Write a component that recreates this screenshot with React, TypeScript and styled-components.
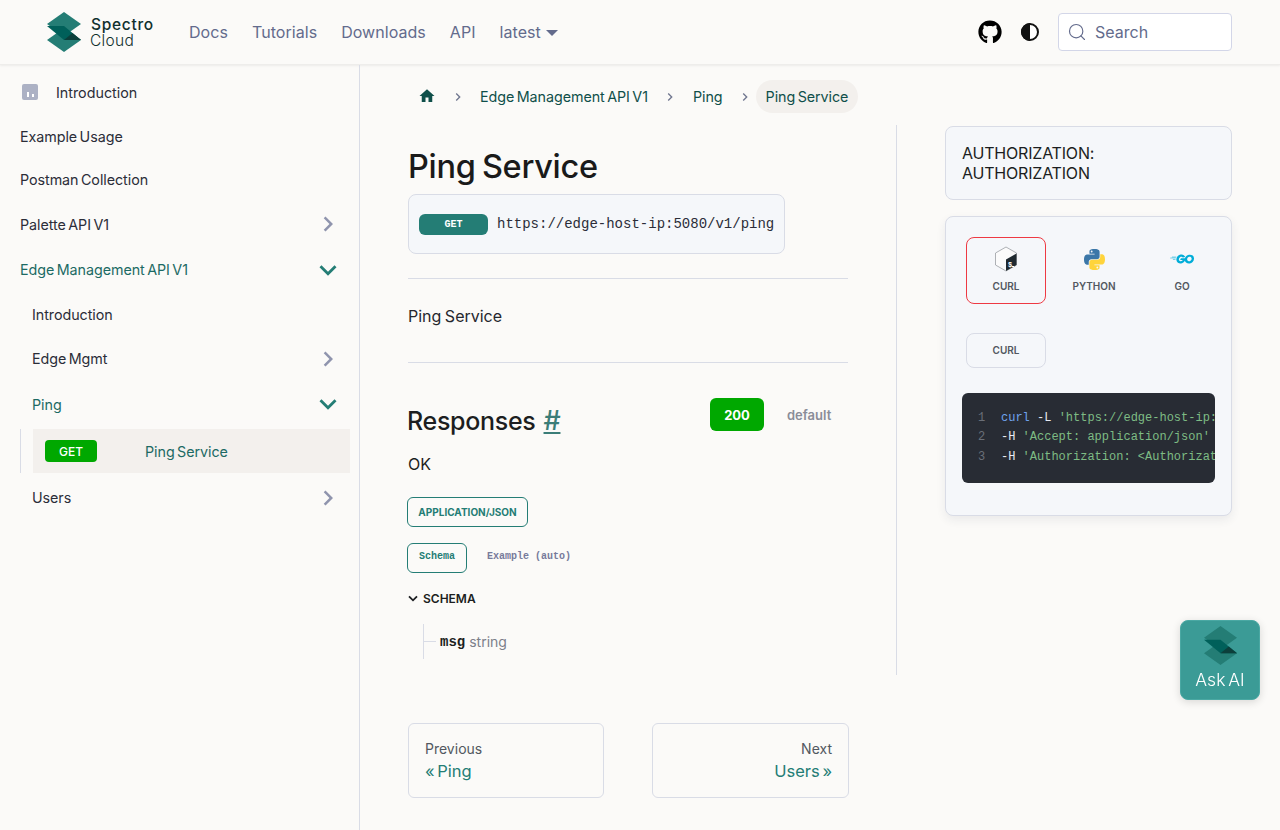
import React from 'react';
import styled, { createGlobalStyle } from 'styled-components';
import { Search as SearchIcon } from 'lucide-react';
import { FaGithub } from 'react-icons/fa';
import { MdChevronRight, MdExpandMore, MdHome, MdKeyboardArrowRight } from 'react-icons/md';
import { SiGo } from 'react-icons/si';

const teal = '#247d75';
const deepTeal = '#0f4f4a';
const line = '#d9dce6';
const panel = '#f5f7fa';
const mono = `'Liberation Mono', monospace`;

const GlobalStyle = createGlobalStyle`
    html, body {
        margin: 0;
        padding: 0;
        background: #fbfaf8;
        color: #1c1e21;
        font-family: Inter, 'Noto Sans', sans-serif;
    }
    * {
        box-sizing: border-box;
    }
`;

const Header = styled.header`
    display: flex;
    align-items: center;
    height: 65px;
    padding: 0 48px 1px 47px;
    background: #fbfaf8;
    border-bottom: 1px solid #eeedeb;
    box-shadow: 0 1px 2px rgba(0, 0, 0, 0.06);
`;

const Brand = styled.div`
    display: flex;
    align-items: center;
    gap: 10px;
    width: 142px;
`;

const BrandText = styled.div`
    display: flex;
    flex-direction: column;
    margin-top: 2px;
    font-size: 15.5px;
    line-height: 16px;
    color: #10302e;
`;

const BrandTop = styled.span`
    font-weight: 500;
    letter-spacing: 0.7px;
`;

const BrandBottom = styled.span`
    margin-left: -1px;
    font-weight: 300;
    letter-spacing: 0.3px;
`;

const NavLinks = styled.nav`
    display: flex;
    align-items: center;
    gap: 24px;
    flex: 1;
`;

const NavLink = styled.a`
    display: flex;
    align-items: center;
    gap: 5px;
    font-size: 16px;
    letter-spacing: 0.05px;
    color: #636b8c;
`;

const Caret = styled.span`
    width: 0;
    height: 0;
    margin-top: 2px;
    border-left: 6px solid transparent;
    border-right: 6px solid transparent;
    border-top: 6px solid #636b8c;
`;

const HeaderTools = styled.div`
    display: flex;
    align-items: center;
`;

const GithubLink = styled.a`
    display: flex;
    color: #000;
    margin-right: 18px;
`;

const ThemeToggle = styled.span`
    display: flex;
    margin-right: 18px;
`;

const SearchBox = styled.div`
    display: flex;
    align-items: center;
    gap: 8px;
    width: 174px;
    height: 38px;
    padding-left: 8px;
    background: #fff;
    border: 1px solid #d3d6e8;
    border-radius: 4px;
    font-size: 16px;
    color: #636b8c;
`;

const Body = styled.div`
    display: flex;
    align-items: stretch;
    min-height: 765px;
`;

const Sidebar = styled.aside`
    width: 360px;
    flex: none;
    padding-top: 5px;
    border-right: 1px solid ${line};
`;

const SideRow = styled.div<{ $h: number; $nested?: boolean; $active?: boolean }>`
    display: flex;
    align-items: center;
    justify-content: space-between;
    height: ${(p) => p.$h}px;
    padding: 0 16px 0 ${(p) => (p.$nested ? 32 : 20)}px;
    font-size: 14.3px;
    letter-spacing: -0.05px;
    word-spacing: -1.5px;
    color: ${(p) => (p.$active ? '#1c6a64' : '#2b2d38')};
`;

const IntroRow = styled.div`
    display: flex;
    align-items: center;
    gap: 18px;
    height: 44px;
    padding-left: 22px;
    font-size: 14.3px;
    color: #2b2d38;
`;

const IntroIcon = styled.span`
    display: flex;
    align-items: flex-end;
    justify-content: center;
    gap: 3px;
    width: 16px;
    height: 16px;
    padding-bottom: 3px;
    background: #acb1c4;
    border-radius: 2px;

    &::before,
    &::after {
        content: '';
        width: 2px;
        background: #fff;
    }
    &::before {
        height: 5px;
    }
    &::after {
        height: 3px;
    }
`;

const SubTree = styled.div`
    margin: 1px 0 0 20px;
    padding-left: 12px;
    border-left: 1px solid ${line};
`;

const CurrentItem = styled.div`
    display: flex;
    align-items: center;
    width: 317px;
    height: 44px;
    padding-left: 12px;
    background: #f3f0ed;
    font-size: 14.3px;
    letter-spacing: -0.05px;
    word-spacing: -1.5px;
    color: #1c6a64;
`;

const GetTag = styled.span`
    display: flex;
    align-items: center;
    justify-content: center;
    width: 52px;
    height: 22px;
    margin-right: 48px;
    background: #00a800;
    border-radius: 4px;
    font-size: 12px;
    font-weight: 500;
    color: #fff;
`;

const Main = styled.main`
    flex: 1;
    padding: 15px 48px 32px;
`;

const Crumbs = styled.div`
    display: flex;
    align-items: center;
    height: 33px;
    margin-bottom: 12px;
    font-size: 14.3px;
    letter-spacing: -0.05px;
    word-spacing: -1.5px;
    color: ${deepTeal};
`;

const CrumbHome = styled.span`
    display: flex;
    margin: -2px 14px 0 10px;
    color: ${deepTeal};
`;

const CrumbSep = styled.span<{ $after: number }>`
    display: flex;
    margin-right: ${(p) => p.$after}px;
    color: #70768f;
`;

const CrumbLink = styled.a<{ $after: number }>`
    margin-right: ${(p) => p.$after}px;
`;

const CrumbCurrent = styled.span`
    display: flex;
    align-items: center;
    height: 33px;
    padding: 0 10px;
    background: #f3f0ed;
    border-radius: 17px;
`;

const Columns = styled.div`
    display: flex;
    align-items: flex-start;
`;

const Article = styled.article`
    width: 489px;
    height: 550px;
    flex: none;
    padding-right: 48px;
    border-right: 1px solid ${line};
`;

const Title = styled.h1`
    height: 42px;
    margin: 21px 0 6px;
    font-size: 32.5px;
    font-weight: 450;
    line-height: 42px;
    letter-spacing: -0.3px;
    word-spacing: -2px;
    color: #1a1a1a;
`;

const Endpoint = styled.div`
    display: flex;
    align-items: center;
    gap: 9px;
    width: 377px;
    height: 60px;
    padding-left: 10px;
    background: ${panel};
    border: 1px solid ${line};
    border-radius: 8px;
    font-family: ${mono};
    font-size: 14px;
    color: #2b2d38;
`;

const MethodBadge = styled.span`
    display: flex;
    align-items: center;
    justify-content: center;
    width: 69px;
    height: 21px;
    background: ${teal};
    border-radius: 6px;
    font-size: 10px;
    font-weight: 700;
    color: #fff;
`;

const Rule = styled.hr`
    height: 1px;
    margin: 0;
    background: ${line};
    border: 0;
`;

const TopRule = styled(Rule)`
    margin-top: 24px;
`;

const Summary = styled.p`
    height: 83px;
    margin: 0;
    padding-top: 25px;
    font-size: 16px;
    line-height: 24px;
    word-spacing: -1px;
    color: #25272e;
`;

const ResponseHead = styled.div`
    display: flex;
    justify-content: space-between;
    align-items: flex-start;
    margin-top: 35px;
`;

const ResponseTitle = styled.h2`
    display: flex;
    gap: 8px;
    margin: 7px 0 0 -1px;
    font-size: 25px;
    font-weight: 450;
    line-height: 32px;
    letter-spacing: -0.3px;
    color: #1c1e21;
`;

const Anchor = styled.a`
    font-size: 27px;
    color: #3b7d78;
    text-decoration: underline;
`;

const StatusTabs = styled.div`
    display: flex;
    align-items: center;
    width: 138px;
    gap: 23px;
`;

const StatusOk = styled.span`
    display: flex;
    align-items: center;
    justify-content: center;
    width: 54px;
    height: 33px;
    background: #00a800;
    border-radius: 6px;
    font-size: 13px;
    font-weight: 700;
    color: #fff;
`;

const StatusDefault = styled.span`
    font-size: 13px;
    font-weight: 600;
    color: #8a8d98;
`;

const OkText = styled.p`
    height: 24px;
    margin: 15px 0 21px;
    font-size: 16px;
    line-height: 24px;
`;

const OutlineChip = styled.span<{ $w: number; $mono?: boolean }>`
    display: flex;
    align-items: center;
    justify-content: center;
    width: ${(p) => p.$w}px;
    height: 30px;
    margin-left: -1px;
    padding-bottom: ${(p) => (p.$mono ? 4 : 0)}px;
    border: 1px solid ${teal};
    border-radius: 6px;
    font-family: ${(p) => (p.$mono ? mono : 'inherit')};
    font-size: 10px;
    font-weight: 700;
    color: ${teal};
`;

const ChipRow = styled.div`
    display: flex;
    align-items: center;
    margin: 16px 0 15px;
    gap: 20px;
`;

const ExampleTab = styled.span`
    margin-bottom: 4px;
    font-family: ${mono};
    font-size: 10px;
    font-weight: 700;
    color: #777a9b;
`;

const SchemaHead = styled.div`
    display: flex;
    align-items: center;
    gap: 5px;
    height: 20px;
    font-size: 12px;
    font-weight: 600;
    color: #1c1e21;
`;

const SchemaTree = styled.div`
    display: flex;
    align-items: center;
    height: 35px;
    margin: 16px 0 0 15px;
    border-left: 1px solid ${line};
`;

const TreeTick = styled.span`
    width: 12px;
    height: 1px;
    margin-right: 4px;
    background: ${line};
`;

const PropName = styled.strong`
    margin-right: 4px;
    font-family: ${mono};
    font-size: 14px;
    color: #1c1e21;
`;

const PropType = styled.span`
    font-size: 14px;
    color: #7c7f8a;
`;

const Pager = styled.div`
    display: grid;
    grid-template-columns: 196px 197px;
    gap: 48px;
    margin-top: 48px;
`;

const PagerCard = styled.a<{ $right?: boolean }>`
    display: flex;
    flex-direction: column;
    justify-content: center;
    height: 75px;
    padding: 0 16px;
    border: 1px solid ${line};
    border-radius: 6px;
    text-align: ${(p) => (p.$right ? 'right' : 'left')};
`;

const PagerHint = styled.span`
    font-size: 14px;
    line-height: 20px;
    color: #525860;
`;

const PagerLabel = styled.span`
    font-size: 16.5px;
    line-height: 24px;
    word-spacing: -2px;
    color: ${teal};
`;

const RightCol = styled.div`
    display: flex;
    flex-direction: column;
    gap: 16px;
    width: 287px;
    margin: 1px 0 0 48px;
    flex: none;
`;

const AuthCard = styled.div`
    height: 74px;
    padding: 16px;
    background: ${panel};
    border: 1px solid ${line};
    border-radius: 8px;
    font-size: 16px;
    line-height: 20px;
    letter-spacing: -0.2px;
    color: #1c1e21;
`;

const CodeCard = styled.div`
    height: 300px;
    padding: 20px 16px;
    background: ${panel};
    border: 1px solid ${line};
    border-radius: 8px;
    box-shadow: 0 4px 10px rgba(40, 50, 80, 0.08);
`;

const LangTabs = styled.div`
    display: flex;
    gap: 8px;
    margin-left: 4px;
`;

const LangTab = styled.div<{ $active?: boolean }>`
    display: flex;
    flex: none;
    flex-direction: column;
    align-items: center;
    width: 80px;
    height: 67px;
    padding-top: 8px;
    border: 1px solid ${(p) => (p.$active ? '#ee3a43' : 'transparent')};
    border-radius: 8px;
    font-size: 10px;
    font-weight: 600;
    color: #525860;
`;

const LangIcon = styled.span`
    display: flex;
    align-items: center;
    justify-content: center;
    height: 26px;
    margin-bottom: 8px;
    color: #00add8;
`;

const SubTab = styled.div`
    display: flex;
    align-items: center;
    justify-content: center;
    width: 80px;
    height: 35px;
    margin: 29px 0 25px 4px;
    padding-bottom: 1px;
    border: 1px solid ${line};
    border-radius: 8px;
    font-size: 10px;
    font-weight: 600;
    color: #525860;
`;

const CodeBlock = styled.div`
    height: 90px;
    padding: 16px 0 0 16px;
    overflow: hidden;
    background: #282c34;
    border-radius: 6px;
    font-family: ${mono};
    font-size: 12px;
    line-height: 19.4px;
    white-space: pre;
`;

const CodeLine = styled.div`
    display: flex;
`;

const LineNo = styled.span`
    width: 23px;
    flex: none;
    color: #6a6f78;
`;

const Cmd = styled.span`
    color: #6fa3ec;
`;

const Flag = styled.span`
    color: #e6eaf2;
`;

const Str = styled.span`
    color: #7ebc84;
`;

const AskAi = styled.button`
    position: fixed;
    right: 20px;
    bottom: 130px;
    display: flex;
    flex-direction: column;
    align-items: center;
    width: 80px;
    height: 80px;
    padding: 5px 0 0;
    background: #3b9b96;
    border: 1px solid #4aa8a3;
    border-radius: 8px;
    box-shadow: 0 2px 8px rgba(0, 0, 0, 0.14);
    font-family: inherit;
    font-size: 17.5px;
    font-weight: 300;
    line-height: 30px;
    word-spacing: -2px;
    color: #fff;
`;

const OpenChevron = styled(MdExpandMore)`
    margin: -2px;
    color: ${teal};
`;

const LogoMark = ({ width = 34, height = 40 }: { width?: number; height?: number }) => (
    <svg width={width} height={height} viewBox="0 0 34 40">
        <path d="M17 0 34 12 17 24 0 12Z" fill={teal} />
        <path d="M17 16 34 28 17 40 0 28Z" fill={teal} />
        <path d="M0 14h17l17 14H17Z" fill="#00605a" />
        <path d="M25.5 21 34 28H17Z" fill="#0c3f3b" />
    </svg>
);

const ThemeIcon = () => (
    <svg width="20" height="20" viewBox="0 0 20 20">
        <circle cx="10" cy="10" r="8" fill="#fff" stroke="#111" strokeWidth="2" />
        <path d="M10 1a9 9 0 0 0 0 18Z" fill="#111" />
    </svg>
);

const BashIcon = () => (
    <svg width="24" height="26" viewBox="0 0 24 26">
        <path d="M12 1 22.5 7v12L12 25 1.500 19V7Z" fill="#fbfbfb" stroke="#9a9ea3" strokeWidth="0.8" />
        <path d="M22.500 7.500v11.500L12 25V13.500Z" fill="#202a30" />
        <text x="14" y="21" fontSize="7" fontFamily="Liberation Mono, monospace" fill="#fff">
            $
        </text>
        <path d="M18 20.500h2" stroke="#fff" strokeWidth="1" />
    </svg>
);

const PythonIcon = () => (
    <svg width="21" height="21" viewBox="0 0 110 110">
        <path
            d="M54.900 0C26.800 0 28.600 12.200 28.600 12.200v12.600h26.800v3.800H17.900S0 26.600 0 54.800C0 83 15.600 82 15.600 82h9.300V68.900s-.5-15.600 15.400-15.600h26.500s14.900.2 14.900-14.400V14.700S84 0 54.900 0Zm-14.700 8.400a4.800 4.800 0 1 1 0 9.600 4.800 4.800 0 0 1 0-9.600Z"
            fill="#3b77a8"
        />
        <path
            transform="rotate(180 55 55)"
            d="M54.900 0C26.800 0 28.600 12.200 28.600 12.200v12.600h26.800v3.800H17.900S0 26.600 0 54.800C0 83 15.600 82 15.600 82h9.300V68.900s-.5-15.600 15.400-15.600h26.500s14.900.2 14.900-14.400V14.700S84 0 54.900 0Zm-14.700 8.400a4.800 4.800 0 1 1 0 9.600 4.800 4.800 0 0 1 0-9.600Z"
            fill="#ffd43b"
        />
    </svg>
);

const SchemaCaret = () => (
    <svg width="10" height="7" viewBox="0 0 10 7">
        <path d="M1 1.300 5 5.300l4-4" fill="none" stroke="#1c1e21" strokeWidth="1.800" />
    </svg>
);

const Closed = () => <MdChevronRight size={30} color="#8f94ad" />;
const Open = () => <OpenChevron size={34} />;

export default function App() {
    return (
        <>
            <GlobalStyle />
            <Header>
                <Brand>
                    <LogoMark />
                    <BrandText>
                        <BrandTop>Spectro</BrandTop>
                        <BrandBottom>Cloud</BrandBottom>
                    </BrandText>
                </Brand>
                <NavLinks>
                    <NavLink>Docs</NavLink>
                    <NavLink>Tutorials</NavLink>
                    <NavLink>Downloads</NavLink>
                    <NavLink>API</NavLink>
                    <NavLink>
                        latest
                        <Caret />
                    </NavLink>
                </NavLinks>
                <HeaderTools>
                    <GithubLink>
                        <FaGithub size={24} />
                    </GithubLink>
                    <ThemeToggle>
                        <ThemeIcon />
                    </ThemeToggle>
                    <SearchBox>
                        <SearchIcon size={20} strokeWidth={1.4} />
                        Search
                    </SearchBox>
                </HeaderTools>
            </Header>
            <Body>
                <Sidebar>
                    <IntroRow>
                        <IntroIcon />
                        Introduction
                    </IntroRow>
                    <SideRow $h={44}>Example Usage</SideRow>
                    <SideRow $h={43}>Postman Collection</SideRow>
                    <SideRow $h={46}>
                        Palette API V1
                        <Closed />
                    </SideRow>
                    <SideRow $h={45} $active>
                        Edge Management API V1
                        <Open />
                    </SideRow>
                    <SideRow $h={45} $nested>
                        Introduction
                    </SideRow>
                    <SideRow $h={43} $nested>
                        Edge Mgmt
                        <Closed />
                    </SideRow>
                    <SideRow $h={48} $nested $active>
                        Ping
                        <Open />
                    </SideRow>
                    <SubTree>
                        <CurrentItem>
                            <GetTag>GET</GetTag>
                            Ping Service
                        </CurrentItem>
                    </SubTree>
                    <SideRow $h={49} $nested>
                        Users
                        <Closed />
                    </SideRow>
                </Sidebar>
                <Main>
                    <Crumbs>
                        <CrumbHome>
                            <MdHome size={18} />
                        </CrumbHome>
                        <CrumbSep $after={14}>
                            <MdKeyboardArrowRight size={16} />
                        </CrumbSep>
                        <CrumbLink $after={14}>Edge Management API V1</CrumbLink>
                        <CrumbSep $after={15}>
                            <MdKeyboardArrowRight size={16} />
                        </CrumbSep>
                        <CrumbLink $after={14}>Ping</CrumbLink>
                        <CrumbSep $after={3}>
                            <MdKeyboardArrowRight size={16} />
                        </CrumbSep>
                        <CrumbCurrent>Ping Service</CrumbCurrent>
                    </Crumbs>
                    <Columns>
                        <Article>
                            <Title>Ping Service</Title>
                            <Endpoint>
                                <MethodBadge>GET</MethodBadge>
                                https://edge-host-ip:5080/v1/ping
                            </Endpoint>
                            <TopRule />
                            <Summary>Ping Service</Summary>
                            <Rule />
                            <ResponseHead>
                                <ResponseTitle>
                                    Responses <Anchor>#</Anchor>
                                </ResponseTitle>
                                <StatusTabs>
                                    <StatusOk>200</StatusOk>
                                    <StatusDefault>default</StatusDefault>
                                </StatusTabs>
                            </ResponseHead>
                            <OkText>OK</OkText>
                            <OutlineChip $w={121}>APPLICATION/JSON</OutlineChip>
                            <ChipRow>
                                <OutlineChip $w={60} $mono>
                                    Schema
                                </OutlineChip>
                                <ExampleTab>Example (auto)</ExampleTab>
                            </ChipRow>
                            <SchemaHead>
                                <SchemaCaret />
                                SCHEMA
                            </SchemaHead>
                            <SchemaTree>
                                <TreeTick />
                                <PropName>msg</PropName>
                                <PropType>string</PropType>
                            </SchemaTree>
                        </Article>
                        <RightCol>
                            <AuthCard>AUTHORIZATION: AUTHORIZATION</AuthCard>
                            <CodeCard>
                                <LangTabs>
                                    <LangTab $active>
                                        <LangIcon>
                                            <BashIcon />
                                        </LangIcon>
                                        CURL
                                    </LangTab>
                                    <LangTab>
                                        <LangIcon>
                                            <PythonIcon />
                                        </LangIcon>
                                        PYTHON
                                    </LangTab>
                                    <LangTab>
                                        <LangIcon>
                                            <SiGo size={24} />
                                        </LangIcon>
                                        GO
                                    </LangTab>
                                </LangTabs>
                                <SubTab>CURL</SubTab>
                                <CodeBlock>
                                    <CodeLine>
                                        <LineNo>1</LineNo>
                                        <Cmd>curl</Cmd>
                                        <Flag> -L </Flag>
                                        <Str>'https://edge-host-ip:5080/v1/ping'</Str>
                                    </CodeLine>
                                    <CodeLine>
                                        <LineNo>2</LineNo>
                                        <Flag>-H </Flag>
                                        <Str>'Accept: application/json'</Str>
                                    </CodeLine>
                                    <CodeLine>
                                        <LineNo>3</LineNo>
                                        <Flag>-H </Flag>
                                        <Str>'Authorization: &lt;Authorization&gt;'</Str>
                                    </CodeLine>
                                </CodeBlock>
                            </CodeCard>
                        </RightCol>
                    </Columns>
                    <Pager>
                        <PagerCard>
                            <PagerHint>Previous</PagerHint>
                            <PagerLabel>« Ping</PagerLabel>
                        </PagerCard>
                        <PagerCard $right>
                            <PagerHint>Next</PagerHint>
                            <PagerLabel>Users »</PagerLabel>
                        </PagerCard>
                    </Pager>
                </Main>
            </Body>
            <AskAi>
                <LogoMark width={33} height={39} />
                Ask AI
            </AskAi>
        </>
    );
}
